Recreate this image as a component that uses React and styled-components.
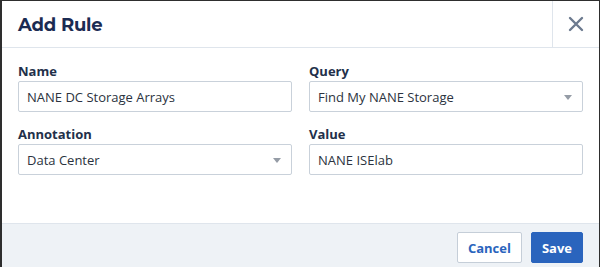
import React from "react";
import styled, { createGlobalStyle } from "styled-components";

const Global = createGlobalStyle`
  html, body { margin: 0; padding: 0; background: #2e2e2e; }
  body { font-family: "Open Sans", "Liberation Sans", sans-serif; }
  * { box-sizing: border-box; }
`;

const Page = styled.div`
  padding: 1px 1px 0 2px;
  height: 267px;
  overflow: hidden;
`;

const Dialog = styled.div`
  background: #fff;
  display: flex;
  flex-direction: column;
  height: 300px;
`;

const Header = styled.div`
  display: flex;
  align-items: stretch;
  height: 47px;
  border-bottom: 1px solid #dfe5ec;
`;

const Title = styled.h2`
  flex: 1;
  margin: 0;
  padding-left: 16px;
  padding-top: 2px;
  display: flex;
  align-items: center;
  font-family: "Montserrat", "Open Sans", sans-serif;
  font-weight: 700;
  font-size: 18px;
  color: #1b2b52;
  letter-spacing: -0.2px;
`;

const CloseButton = styled.button`
  width: 47px;
  border: none;
  border-left: 1px solid #dfe5ec;
  background: transparent;
  display: flex;
  align-items: center;
  justify-content: center;
  padding: 0;
  cursor: pointer;
`;

const Body = styled.div`
  padding: 15px 16px 0 16px;
  height: 175px;
  display: grid;
  grid-template-columns: 1fr 1fr;
  column-gap: 17px;
  row-gap: 14px;
  align-content: start;
`;

const Field = styled.div`
  display: flex;
  flex-direction: column;
`;

const Label = styled.label`
  font-size: 13px;
  line-height: 16px;
  font-weight: 700;
  color: #22304a;
  margin-bottom: 2px;
`;

const Box = styled.div`
  position: relative;
  height: 31px;
  border: 1px solid #c9d1da;
  border-radius: 2px;
  display: flex;
  align-items: center;
  padding: 0 8px;
  font-size: 13px;
  color: #2b3340;
  background: #fff;
`;

const Caret = styled.span`
  position: absolute;
  right: 10px;
  top: 50%;
  margin-top: -2px;
  width: 0;
  height: 0;
  border-left: 4.5px solid transparent;
  border-right: 4.5px solid transparent;
  border-top: 5px solid #959ca6;
`;

const Footer = styled.div`
  flex: 1;
  background: #eef2f6;
  border-top: 1px solid #dfe5ec;
  display: flex;
  justify-content: flex-end;
  align-items: flex-start;
  gap: 9px;
  padding: 8px 16px 0 0;
`;

const Button = styled.button`
  height: 31px;
  padding: 0 10px;
  border-radius: 2px;
  font-family: "Open Sans", sans-serif;
  font-size: 13px;
  font-weight: 700;
  border: 1px solid ${(p) => (p.$primary ? "#2a64bd" : "#c5ced8")};
  background: ${(p) => (p.$primary ? "#2a64bd" : "#fff")};
  color: ${(p) => (p.$primary ? "#fff" : "#2a64bd")};
  cursor: pointer;
`;

function Input({ value, select }) {
  return (
    <Box>
      {value}
      {select && <Caret />}
    </Box>
  );
}

export default function App() {
  return (
    <Page>
      <Global />
      <Dialog>
        <Header>
          <Title>Add Rule</Title>
          <CloseButton aria-label="Close">
            <svg width="16" height="16" viewBox="0 0 16 16">
              <path d="M2 2 L14 14 M14 2 L2 14" stroke="#6c7a8f" strokeWidth="2.4" strokeLinecap="round" />
            </svg>
          </CloseButton>
        </Header>
        <Body>
          <Field>
            <Label>Name</Label>
            <Input value="NANE DC Storage Arrays" />
          </Field>
          <Field>
            <Label>Query</Label>
            <Input value="Find My NANE Storage" select />
          </Field>
          <Field>
            <Label>Annotation</Label>
            <Input value="Data Center" select />
          </Field>
          <Field>
            <Label>Value</Label>
            <Input value="NANE ISElab" />
          </Field>
        </Body>
        <Footer>
          <Button>Cancel</Button>
          <Button $primary>Save</Button>
        </Footer>
      </Dialog>
    </Page>
  );
}
